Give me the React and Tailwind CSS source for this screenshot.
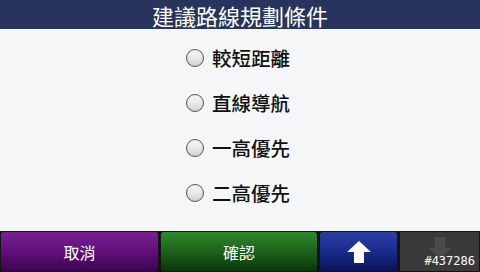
const options = ["較短距離", "直線導航", "一高優先", "二高優先"];

const App = () => {
  return (
    <div
      className="w-[480px] h-[272px] flex flex-col bg-[#f5f6f7] overflow-hidden"
      style={{ fontFamily: '"Noto Sans CJK TC", "Noto Sans", sans-serif' }}
    >
      {/* Header */}
      <div className="h-[29px] bg-[#27355d] flex items-center justify-center text-white text-[22px] leading-none">
        建議路線規劃條件
      </div>

      {/* Options */}
      <div className="flex-1 flex flex-col items-center pt-[19px] gap-[25px]">
        {options.map((label) => (
          <div key={label} className="flex items-center gap-[8px] h-[20px] pr-[4px]">
            <span className="w-[18px] h-[18px] rounded-full border-[1.5px] border-[#555] bg-gradient-to-b from-white to-[#d2d2d2] shadow-inner" />
            <span className="text-[19.5px] leading-none font-medium text-[#111]">{label}</span>
          </div>
        ))}
      </div>

      {/* Bottom bar */}
      <div className="h-[41px] bg-[#141414] flex gap-[3px] px-px py-px">
        <button className="w-[157px] rounded-[3px] bg-gradient-to-b from-[#7a1f95] via-[#611079] to-[#3a0550] text-white text-[16px] flex items-center justify-center">
          取消
        </button>
        <button className="w-[156px] rounded-[3px] bg-gradient-to-b from-[#2e8a2a] via-[#1c621a] to-[#0c360b] text-white text-[16px] flex items-center justify-center">
          確認
        </button>
        <button className="w-[77px] rounded-[3px] bg-gradient-to-b from-[#2c3ea8] via-[#1a2b8a] to-[#0b1556] text-white flex items-center justify-center">
          <svg width="26" height="24" viewBox="0 0 26 24">
            <path d="M13 1 L25 12 L18 12 L18 23 L8 23 L8 12 L1 12 Z" fill="white" />
          </svg>
        </button>
        <div className="flex-1 bg-[#3a3a3a] relative flex items-center justify-center">
          <svg width="26" height="24" viewBox="0 0 26 24" className="mb-2">
            <path d="M13 23 L25 12 L18 12 L18 1 L8 1 L8 12 L1 12 Z" fill="#4a4a4a" />
          </svg>
          <span
            className="absolute right-[4px] bottom-[4px] text-white text-[12px] leading-none"
            style={{ fontFamily: '"DejaVu Sans Mono", monospace' }}
          >
            #437286
          </span>
        </div>
      </div>
    </div>
  );
};

export default App;
